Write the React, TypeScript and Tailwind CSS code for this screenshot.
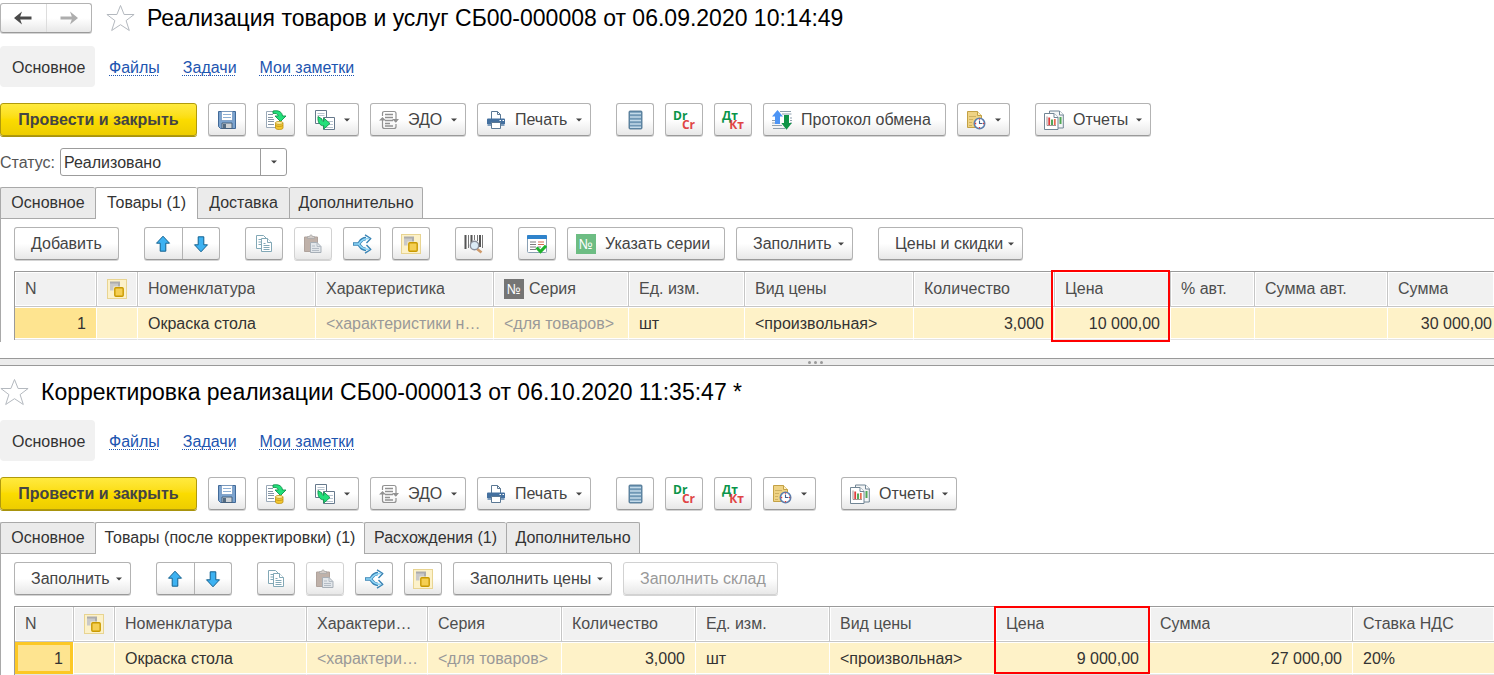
import React from "react";
import clsx from "clsx";

type IconProps = { className?: string };

const StarIcon = () => (
  <svg width="29" height="28" viewBox="0 0 29 28" fill="none" stroke="#b4b9bf" strokeWidth="1">
    <path d="M14.5 1.5l3.6 9h10l-8 6.1 3.2 9.9-8.8-5.8-8.8 5.8 3.2-9.9-8-6.1h10z" />
  </svg>
);

const BackIcon = ({ className }: IconProps) => (
  <svg width="18" height="14" viewBox="0 0 18 14" className={className} fill="currentColor">
    <path d="M0 7l8-6.5L6.200 5.500H17.500v3H6.200L8 13.500z" />
  </svg>
);

const SaveIcon = () => (
  <svg width="20" height="20" viewBox="0 0 20 20">
    <path d="M1.500 1.500h17v17H3.500l-2-2z" fill="#7ba3cf" stroke="#426a98" />
    <path d="M4.500 1.500h11v9h-11z" fill="#fff" stroke="#5f87b3" strokeWidth=".6" />
    <path d="M6 4.500h8M6 7.500h8" stroke="#8fb0d4" />
    <path d="M5 13h10v5.500H5z" fill="#cfd3d6" stroke="#46627f" />
    <path d="M6 14h3v4H6z" fill="#536b82" />
  </svg>
);

const PostIcon = () => (
  <svg width="20" height="20" viewBox="0 0 20 20">
    <path d="M.5 1.500h13v16H.5z" fill="#fff" stroke="#9aa9b8" />
    <path d="M2 4.500h5M2 7.500h5M2 9.500h6M2 11.500h6M2 14.500h6" stroke="#8595a5" />
    <path d="M7 1c6-1 9 1 9.500 5H20l-5.500 5.500L9 6h3.300C12 4 10 3 7 3.500z" fill="#22e07a" stroke="#12924c" strokeWidth=".9" />
    <path d="M9.500 13v5c0 2 7.500 2 7.500 0v-5z" fill="#f3c832" stroke="#bd8f10" strokeWidth=".8" />
    <ellipse cx="13.200" cy="12.900" rx="3.800" ry="1.500" fill="#fff0a0" stroke="#bd8f10" strokeWidth=".8" />
    <path d="M9.600 15.500c1 1.300 6.200 1.300 7.300 0" fill="none" stroke="#bd8f10" strokeWidth=".8" />
  </svg>
);

const BaseOnIcon = () => (
  <svg width="20" height="20" viewBox="0 0 20 20">
    <path d="M.5.500h11v13H.5z" fill="#fff" stroke="#66798c" />
    <path d="M2.500 3.500h7M2.500 5.500h7" stroke="#b8c4cf" />
    <path d="M8.500 7.500h11v12h-11z" fill="#fff" stroke="#66798c" />
    <path d="M13 11.500h5M13 14.500h5M11 17.500h7" stroke="#b8c4cf" />
    <path d="M3 6.500l4 2.500c0 2 .5 2.200 1.800 2.200V8l6.200 5.500L8.800 19v-3.200C4.500 15.800 2.500 12 3 6.500z" fill="#22e07a" stroke="#12924c" strokeWidth=".9" />
  </svg>
);

const EdoIcon = () => (
  <svg width="20" height="20" viewBox="0 0 20 20" fill="none" stroke="#929292">
    <path d="M3.500 6V3.500c0-1.500.5-2 2-2h9.500c1.500 0 2 .5 2 2V12M3.500 8v8.500c0 1.500.5 2 2 2h9.500c1.500 0 2-.5 2-2V14" strokeWidth="1.200" />
    <path d="M6 4.500h8M6 7.500h8M6 10.500h8M6 13.500h5M6 16h8" strokeWidth="1.300" />
    <path d="M0 10.500L3.500 7 7 10.500zM13 9l3.800 3.800L20 9z" fill="#929292" stroke="none" />
  </svg>
);

const PrintIcon = () => (
  <svg width="20" height="20" viewBox="0 0 20 20">
    <path d="M5.500 9V1.500h6l3 3V9" fill="#fff" stroke="#5b7894" />
    <path d="M11.500 1.500v3h3" fill="none" stroke="#5b7894" />
    <path d="M2 8.500h16a1 1 0 011 1V14H1V9.500a1 1 0 011-1z" fill="#44709f" />
    <path d="M1.500 14h17v2h-17z" fill="#7e9dbd" />
    <path d="M5.500 12.500h9v6h-9z" fill="#fff" stroke="#5b7894" />
    <path d="M13.500 10.500H15M16.500 10.500H18" stroke="#fff" />
  </svg>
);

const RegisterIcon = () => (
  <svg width="20" height="20" viewBox="0 0 20 20">
    <rect x="4" y="1" width="13" height="18" rx="1" fill="#6f97b5" stroke="#3f6785" strokeWidth=".8" />
    <path d="M5 3.500h11M5 7h11M5 10.500h11M5 14h11M5 17.200h11" stroke="#c3dae9" strokeWidth="1.500" />
  </svg>
);

const ExchangeIcon = () => (
  <svg width="20" height="20" viewBox="0 0 20 20">
    <path d="M8 1.500h11M10 4h9.500M0 10.500h3M0 13h3M0 15.500h10M1 18.500h12M18 8h2M18 10.500h2M18 13h2" stroke="#8fa0ae" />
    <path d="M5.500 0L11 6.500H8V14H3V6.500H0z" fill="#4c94f5" />
    <path d="M12 5h5v8h2.800L14.500 19.800 9.300 13H12z" fill="#0f9447" />
  </svg>
);

const ScheduleIcon = () => (
  <svg width="20" height="20" viewBox="0 0 20 20">
    <path d="M1.500 1.500h10l4 4v12h-14z" fill="#efd384" stroke="#c3a145" />
    <path d="M11.500 1.500v4h4" fill="#fff1c2" stroke="#c3a145" />
    <path d="M3 6.500h7M3 9.500h4M3 12.500h3M3 15.500h3" stroke="#cfb262" />
    <circle cx="13.500" cy="13.500" r="5.200" fill="#fff" stroke="#5c7fae" strokeWidth="1.600" />
    <path d="M13.500 10.500v3h3" fill="none" stroke="#3e608f" strokeWidth="1.100" />
    <path d="M13.500 8.800v1M13.500 17v1.200M9 13.500h1.200M17 13.500h1.200" stroke="#e23b3b" strokeWidth="1.300" />
  </svg>
);

const ReportIcon = () => (
  <svg width="20" height="20" viewBox="0 0 20 20">
    <path d="M5.500 1h10l3.800 3.800V18H5.500z" fill="#f3f5f6" stroke="#718594" />
    <path d="M15.500 1v4h4" fill="#fff" stroke="#718594" />
    <path d="M16.500 7v7" stroke="#50a855" strokeWidth="2" />
    <path d="M.5 3.500H10L14 7.500v12H.5z" fill="#fff" stroke="#718594" />
    <path d="M10 3.500v4h4" fill="#fff" stroke="#718594" />
    <path d="M3 6.500v9H12" fill="none" stroke="#8c7a7a" strokeWidth=".8" />
    <path d="M5.200 7.500v7.500" stroke="#e03c3c" strokeWidth="1.800" />
    <path d="M8 9.500v5.500" stroke="#3d9f49" strokeWidth="1.800" />
    <path d="M10.800 9v6" stroke="#e86a50" strokeWidth="1.800" />
  </svg>
);

const UpIcon = ({ className }: IconProps) => (
  <svg width="16" height="18" viewBox="0 0 16 18" className={className}>
    <path d="M8 1.200l6.500 7H10.800v8H5.200v-8H1.500z" fill="#3db2f2" stroke="#12608f" strokeLinejoin="round" />
  </svg>
);

const CopyIcon = () => (
  <svg width="20" height="20" viewBox="0 0 20 20" fill="#fff" stroke="#82a8b6">
    <path d="M2.500 1.500h7l3 3v10h-10z" />
    <path d="M4.500 5.500h3M4.500 8h3M4.500 10.500h3" />
    <path d="M7.500 4.500h6l4 4v9h-10z" />
    <path d="M13.500 4.500v4h4M9.500 9.500h2M9.500 11.500h6M9.500 13.500h6M9.500 15.500h6" />
  </svg>
);

const PasteIcon = () => (
  <svg width="20" height="20" viewBox="0 0 20 20">
    <path d="M1.500 3h13v14.500h-13z" fill="#bfb1a9" stroke="#b0a39c" />
    <path d="M4.500 4.500v-2h2c0-2 3-2 3 0h2v2z" fill="#d3ccc8" stroke="#aaa" strokeWidth=".8" />
    <path d="M7.500 8.500h6.500l4 4V18.500H7.500z" fill="#e2e6ea" stroke="#a7afb7" />
    <path d="M14 8.500v4h4M9 12h3M9 14.500h7M9 16.500h7" fill="none" stroke="#b4bcc5" />
  </svg>
);

const SplitIcon = () => (
  <svg width="20" height="20" viewBox="0 0 20 20" fill="none">
    <path d="M1 10h5C8 10 8 4.500 14 4.500M6 10c2 0 2 5.500 8 5.500" stroke="#3984b5" strokeWidth="3.400" />
    <path d="M13 .8L18.800 4.500 14.500 9M13 19.200l5.800-3.700L14.500 11" fill="none" stroke="#3984b5" strokeWidth="1.400" strokeLinejoin="round" />
    <path d="M1.800 10h4.200C8 10 8 4.500 17 4.500M6 10c2 0 2 5.500 11 5.500" stroke="#8fd6f7" strokeWidth="1.600" />
  </svg>
);

const GroupIcon = () => (
  <svg width="20" height="20" viewBox="0 0 20 20">
    <rect x=".5" y=".5" width="19" height="19" fill="#fcf1c9" stroke="#e8d491" />
    <path d="M3 2.500h10v8H9v-4H5v4H3z" fill="#acacac" />
    <path d="M3 4.500h8v7H3z" fill="#c9c9c9" />
    <rect x="6.500" y="7.500" width="10.500" height="10.500" fill="#fcf1c9" />
    <rect x="7.800" y="8.800" width="8.400" height="8.400" rx="1" fill="#f5cf52" stroke="#c99a00" strokeWidth="1.400" />
  </svg>
);

const BarcodeIcon = () => (
  <svg width="20" height="20" viewBox="0 0 20 20">
    <path d="M1.500 1v14M7.500 1v12M16 1v12" stroke="#555" strokeWidth="2" />
    <path d="M4.500 1v13M10.500 1v5M13.500 1v6M18.500 1v13" stroke="#777" />
    <path d="M12.500 14.500l5 4" stroke="#cf9a6a" strokeWidth="2.600" />
    <circle cx="10.500" cy="11.500" r="4.200" fill="#dcebf7" stroke="#8b8f9c" strokeWidth="1.400" />
  </svg>
);

const CheckListIcon = () => (
  <svg width="20" height="20" viewBox="0 0 20 20">
    <rect x=".5" y="1.500" width="19" height="17" rx="1" fill="#fff" stroke="#8aa0b3" />
    <path d="M0 2a1 1 0 011-1h18a1 1 0 011 1v3H0z" fill="#2f83cb" />
    <path d="M3 8h6M3 10.500h6M3 13h6M3 15.500h6" stroke="#7c7c7c" />
    <path d="M11 8h6M11 10.500h6" stroke="#d8694f" />
    <path d="M11 13h3" stroke="#7c7c7c" />
    <path d="M9.500 13.500l4 4L19 11.800" fill="none" stroke="#1fb32c" strokeWidth="3" />
  </svg>
);

const NumberIcon = ({ className }: IconProps) => (
  <span className={clsx("flex h-5 w-5 shrink-0 items-center justify-center font-['Open_Sans',sans-serif] text-sm text-white", className)}>
    №
  </span>
);

const Caret = () => (
  <svg width="6" height="4" viewBox="0 0 6 4" className="shrink-0" fill="#444">
    <path d="M0 .5h6L3 3.500z" />
  </svg>
);

const Postings = ({ debit, credit }: { debit: string; credit: string }) => (
  <span className="flex w-[22px] flex-col text-left font-['Open_Sans',sans-serif] text-xs leading-[9px] font-bold">
    <span className="self-start text-[#0a9448]">{debit}</span>
    <span className="self-end text-[#e04545]">{credit}</span>
  </span>
);

const buttonFace =
  "border border-[#b3b3b3] border-b-[#9a9a9a] bg-linear-to-b from-white from-50% to-[#e8e8e8] text-[#444] shadow-[0_1px_0_#d4d4d4]";

type ToolButtonProps = {
  icon?: React.ReactNode;
  text?: string;
  label?: string;
  menu?: boolean;
  disabled?: boolean;
  width?: string;
};

const ToolButton = ({ icon, text, label, menu, disabled, width = "w-[38px]" }: ToolButtonProps) => (
  <button
    type="button"
    aria-label={label}
    disabled={disabled}
    className={clsx(
      "flex h-[33px] shrink-0 items-center rounded-[3px] whitespace-nowrap disabled:border-[#d2d2d2] disabled:text-[#999]",
      buttonFace,
      width,
      text || menu ? (icon ? "pl-2" : "pl-4") : "justify-center",
      menu && "pr-2"
    )}
  >
    {icon}
    {text && <span className={icon ? "pl-[9px]" : ""}>{text}</span>}
    {menu && (
      <span className="ml-auto">
        <Caret />
      </span>
    )}
  </button>
);

const MoveButtons = () => (
  <div className={clsx("flex h-[33px] w-[76px] rounded-[3px]", buttonFace)}>
    <button type="button" aria-label="Вверх" className="flex flex-1 items-center justify-center border-r border-[#b3b3b3]">
      <UpIcon />
    </button>
    <button type="button" aria-label="Вниз" className="flex flex-1 items-center justify-center">
      <UpIcon className="rotate-180" />
    </button>
  </div>
);

const Group = ({ children }: { children: React.ReactNode }) => (
  <div className="flex gap-[11px]">{children}</div>
);

const SubNav = () => (
  <nav className="mt-[10px] flex h-[41px] items-center gap-[23px]">
    <div className="-mr-[9px] flex h-full w-[95px] items-center rounded-[4px] bg-[#f1f1f1] pt-[2px] pl-3 text-[#333]">Основное</div>
    {["Файлы", "Задачи", "Мои заметки"].map((item) => (
      <a
        key={item}
        href="#"
        className="pt-[2px] text-[#1d55b0] underline decoration-dotted decoration-1 underline-offset-2 [text-decoration-skip-ink:none]"
      >
        {item}
      </a>
    ))}
  </nav>
);

const MainToolbar = ({ exchange }: { exchange?: boolean }) => (
  <div className="mt-4 flex h-[34px] gap-[25px]">
    <Group>
      <button
        type="button"
        className="h-[33px] w-[197px] shrink-0 rounded-[3px] border border-[#b09a0c] bg-linear-to-b from-[#ffea3d] via-[#fbdc00] to-[#edcd00] font-bold whitespace-nowrap text-[#444] shadow-[0_1px_0_#a8930c]"
      >
        Провести и закрыть
      </button>
      <ToolButton label="Записать" icon={<SaveIcon />} />
      <ToolButton label="Провести" icon={<PostIcon />} />
      <ToolButton label="Создать на основании" icon={<BaseOnIcon />} menu width="w-[53px]" />
      <ToolButton icon={<EdoIcon />} text="ЭДО" menu width="w-[96px]" />
      <ToolButton icon={<PrintIcon />} text="Печать" menu width="w-[114px]" />
    </Group>
    <Group>
      <ToolButton label="Движения документа" icon={<RegisterIcon />} />
      <ToolButton icon={<Postings debit="Dr" credit="Cr" />} />
      <ToolButton icon={<Postings debit="Дт" credit="Кт" />} />
      {exchange && <ToolButton icon={<ExchangeIcon />} text="Протокол обмена" width="w-[183px]" />}
      <ToolButton label="Напоминания" icon={<ScheduleIcon />} menu width="w-[53px]" />
    </Group>
    <ToolButton icon={<ReportIcon />} text="Отчеты" menu width="w-[116px]" />
  </div>
);

type Tab = { title: string; width: string };

const saleTabs: Tab[] = [
  { title: "Основное", width: "w-[95px]" },
  { title: "Товары (1)", width: "w-[102px]" },
  { title: "Доставка", width: "w-[92px]" },
  { title: "Дополнительно", width: "w-[134px]" },
];

const correctionTabs: Tab[] = [
  { title: "Основное", width: "w-[95px]" },
  { title: "Товары (после корректировки) (1)", width: "w-[269px]" },
  { title: "Расхождения (1)", width: "w-[142px]" },
  { title: "Дополнительно", width: "w-[134px]" },
];

const Tabs = ({ items, active }: { items: Tab[]; active: number }) => (
  <div role="tablist" className="mt-[11px] flex h-8 border-b border-[#a9a9a9]">
    {items.map((item, index) => (
      <button
        key={item.title}
        type="button"
        role="tab"
        aria-selected={index === active}
        className={clsx(
          "shrink-0 rounded-t-[2px] border-t border-l border-[#a9a9a9] whitespace-nowrap text-[#333] last:border-r",
          item.width,
          index === active ? "h-8 bg-white pb-px" : "h-[31px] bg-[#ebebeb]"
        )}
      >
        {item.title}
      </button>
    ))}
  </div>
);

type Column = {
  title?: string;
  icon?: React.ReactNode;
  width?: string;
  value?: string;
  numeric?: boolean;
  muted?: boolean;
  mark?: string;
};

const goods: Column[] = [
  { title: "N", width: "w-[82px]", value: "1", numeric: true },
  { icon: <GroupIcon />, width: "w-[41px]" },
  { title: "Номенклатура", width: "w-[178px]", value: "Окраска стола" },
  { title: "Характеристика", width: "w-[178px]", value: "<характеристики н…", muted: true },
  { title: "Серия", icon: <NumberIcon className="bg-[#757575]" />, width: "w-[135px]", value: "<для товаров>", muted: true },
  { title: "Ед. изм.", width: "w-[116px]", value: "шт" },
  { title: "Вид цены", width: "w-[169px]", value: "<произвольная>" },
  { title: "Количество", width: "w-[141px]", value: "3,000", numeric: true },
  { title: "Цена", width: "w-[116px]", value: "10 000,00", numeric: true, mark: "h-[72px] -top-[2px] -left-[4px] right-0" },
  { title: "% авт.", width: "w-[84px]" },
  { title: "Сумма авт.", width: "w-[133px]" },
  { title: "Сумма", value: "30 000,00", numeric: true },
];

const corrected: Column[] = [
  { title: "N", width: "w-[59px]", value: "1", numeric: true },
  { icon: <GroupIcon />, width: "w-[41px]" },
  { title: "Номенклатура", width: "w-[192px]", value: "Окраска стола" },
  { title: "Характери…", width: "w-[121px]", value: "<характери…", muted: true },
  { title: "Серия", width: "w-[134px]", value: "<для товаров>", muted: true },
  { title: "Количество", width: "w-[134px]", value: "3,000", numeric: true },
  { title: "Ед. изм.", width: "w-[134px]", value: "шт" },
  { title: "Вид цены", width: "w-[166px]", value: "<произвольная>" },
  { title: "Цена", width: "w-[154px]", value: "9 000,00", numeric: true, mark: "h-[68px] -top-px -left-[2px] -right-px" },
  { title: "Сумма", width: "w-[203px]", value: "27 000,00", numeric: true },
  { title: "Ставка НДС", value: "20%" },
];

const GoodsTable = ({ columns, focused }: { columns: Column[]; focused?: boolean }) => (
  <table className="w-full table-fixed border-separate border-spacing-0 border-t border-l border-[#9a9a9a]">
    <thead>
      <tr className="h-[35px]">
        {columns.map((column, index) => (
          <th
            key={index}
            className={clsx(
              "relative border-r border-b border-[#c6c6c6] bg-[#f1f1f1] pr-1 pl-[10px] text-left font-normal text-[#4d4d4d] shadow-[inset_0_0_0_1px_#fff] last:border-r-0",
              column.width
            )}
          >
            <div className="flex items-center gap-[5px]">
              {column.icon}
              {column.title && <span className="truncate">{column.title}</span>}
            </div>
            {column.mark && <div className={clsx("absolute z-10 border-2 border-[#ff0000]", column.mark)} />}
          </th>
        ))}
      </tr>
    </thead>
    <tbody>
      <tr className="h-[33px]">
        {columns.map((column, index) => (
          <td
            key={index}
            className={clsx(
              "truncate border-r border-b border-r-white border-b-[#e3e3e3] pt-[2px] last:border-r-0",
              index === 0 ? "bg-[#fee490]" : "bg-[#fef2c8]",
              index === 0 && focused
                ? "shadow-[inset_0_0_0_3px_#fcc825]"
                : "shadow-[inset_0_1px_0_#fff,inset_0_-1px_0_#fff]",
              column.numeric ? "text-right" : "pl-[10px]",
              column.numeric && index < columns.length - 1 ? "pr-[10px]" : "pr-[2px]",
              column.muted ? "text-[#999]" : "text-[#333]"
            )}
          >
            {column.value}
          </td>
        ))}
      </tr>
    </tbody>
  </table>
);

const RowTools = () => (
  <>
    <ToolButton label="Копировать" icon={<CopyIcon />} />
    <ToolButton label="Вставить" icon={<PasteIcon />} disabled />
    <ToolButton label="Разбить строку" icon={<SplitIcon />} />
    <ToolButton label="Группировка" icon={<GroupIcon />} />
  </>
);

const SaleDocument = () => (
  <section>
    <header className="flex h-9 items-center">
      <div className={clsx("flex h-[30px] w-[92px] shrink-0 rounded-[3px]", buttonFace)}>
        <button type="button" aria-label="Назад" className="flex flex-1 items-center justify-center border-r border-[#ddd]">
          <BackIcon className="text-[#4a4a4a]" />
        </button>
        <button type="button" aria-label="Вперед" className="flex flex-1 items-center justify-center">
          <BackIcon className="rotate-180 text-[#adadad]" />
        </button>
      </div>
      <button type="button" aria-label="В избранное" className="ml-[14px]">
        <StarIcon />
      </button>
      <h1 className="ml-3 truncate text-[23px] text-black">Реализация товаров и услуг СБ00-000008 от 06.09.2020 10:14:49</h1>
    </header>
    <SubNav />
    <MainToolbar exchange />

    <div className="mt-[11px] flex h-7 items-center">
      <label htmlFor="status" className="w-[60px] pt-[2px] text-[#555]">
        Статус:
      </label>
      <div className="relative h-full w-[227px]">
        <select id="status" className="h-full w-full appearance-none rounded-[3px] border border-[#9c9c9c] bg-white pt-px pl-[3px] text-[#333]">
          <option>Реализовано</option>
        </select>
        <span className="pointer-events-none absolute inset-y-px right-px flex w-[26px] items-center justify-center border-l border-[#9c9c9c]">
          <Caret />
        </span>
      </div>
    </div>

    <Tabs items={saleTabs} active={1} />
    <div className="border-l border-[#a9a9a9] pt-2 pl-[13px]">
      <div className="mb-[10px] flex h-[34px] gap-[25px]">
        <ToolButton text="Добавить" width="w-[105px]" />
        <MoveButtons />
        <Group>
          <RowTools />
        </Group>
        <ToolButton label="Поиск по штрихкоду" icon={<BarcodeIcon />} />
        <Group>
          <ToolButton label="Проверить" icon={<CheckListIcon />} />
          <ToolButton icon={<NumberIcon className="bg-[#6dbd83]" />} text="Указать серии" width="w-[158px]" />
          <ToolButton text="Заполнить" menu width="w-[117px]" />
        </Group>
        <ToolButton text="Цены и скидки" menu width="w-[145px]" />
      </div>
      <div className="pb-[2px]">
        <GoodsTable columns={goods} />
      </div>
    </div>
  </section>
);

const CorrectionDocument = () => (
  <section className="pt-2">
    <header className="flex h-9 items-center">
      <button type="button" aria-label="В избранное">
        <StarIcon />
      </button>
      <h2 className="ml-3 truncate text-[23px] text-black">Корректировка реализации СБ00-000013 от 06.10.2020 11:35:47 *</h2>
    </header>
    <SubNav />
    <MainToolbar />
    <Tabs items={correctionTabs} active={1} />
    <div className="border-l border-[#a9a9a9] pt-2 pl-[13px]">
      <div className="mb-[10px] flex h-[34px] gap-[25px]">
        <ToolButton text="Заполнить" menu width="w-[117px]" />
        <MoveButtons />
        <Group>
          <RowTools />
          <ToolButton text="Заполнить цены" menu width="w-[159px]" />
          <ToolButton text="Заполнить склад" disabled width="w-[155px]" />
        </Group>
      </div>
      <GoodsTable columns={corrected} focused />
    </div>
  </section>
);

const App = () => {
  return (
    <main className="overflow-hidden bg-white font-['Liberation_Sans',Arial,sans-serif] text-base">
      <SaleDocument />

      {/* Splitter */}
      <div className="mt-4 flex h-2 items-center justify-center gap-[3px] border-y border-[#999] bg-[#ececec] pl-[136px]">
        <span className="h-[3px] w-[3px] rounded-full bg-[#999]" />
        <span className="h-[3px] w-[3px] rounded-full bg-[#999]" />
        <span className="h-[3px] w-[3px] rounded-full bg-[#999]" />
      </div>

      <CorrectionDocument />
    </main>
  );
};

export default App;
